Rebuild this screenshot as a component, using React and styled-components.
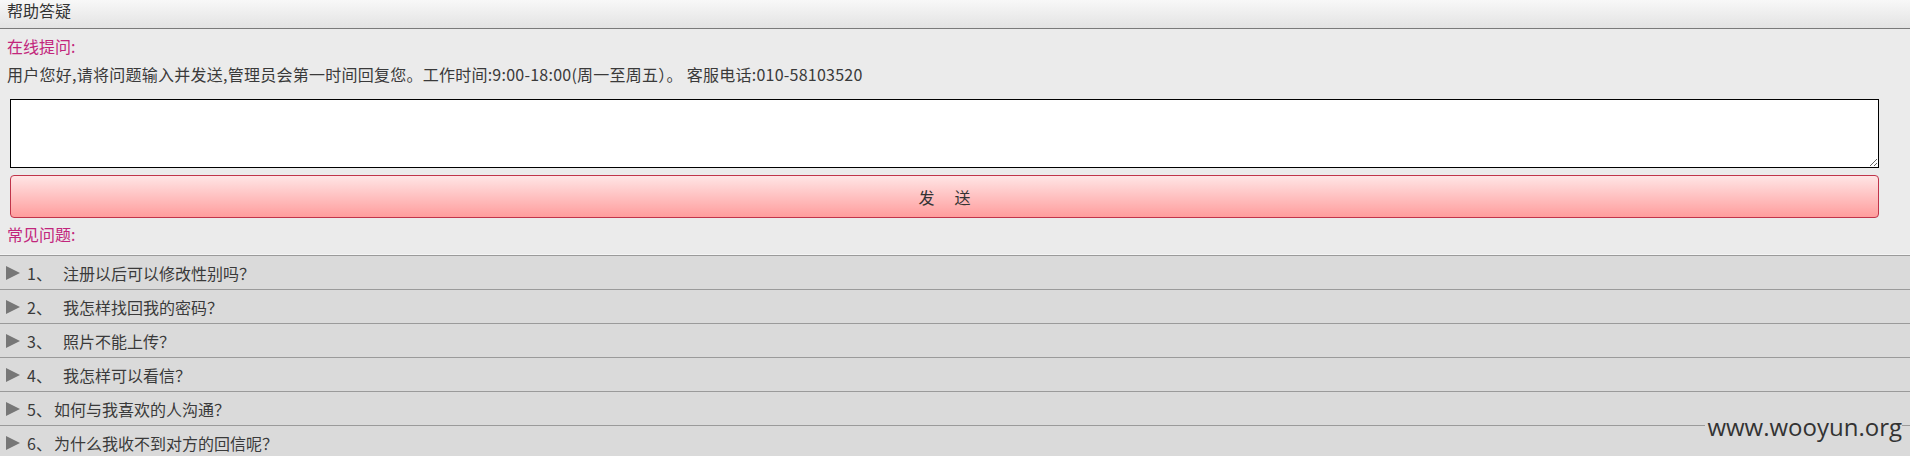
import React from "react";
import styled, { createGlobalStyle } from "styled-components";

const Global = createGlobalStyle`
  html, body { margin: 0; padding: 0; }
  body {
    background: #ebebeb;
    font-family: "Noto Sans CJK SC", "Liberation Sans", sans-serif;
    font-size: 16px;
    color: #333;
    overflow: hidden;
  }
`;

const Page = styled.div`
  position: relative;
  width: 1910px;
  min-height: 456px;
`;

const Header = styled.div`
  height: 28px;
  line-height: 20px;
  padding-left: 7px;
  border-bottom: 1px solid #7a7a7a;
  background: linear-gradient(#f8f8f8, #e3e3e3);
  color: #333;
`;

const Section = styled.div`
  padding: 7px 0 0 0;
`;

const Label = styled.div`
  color: #c2267c;
  line-height: 20px;
  padding-left: 7px;
`;

const Notice = styled.div`
  line-height: 20px;
  padding-left: 7px;
  margin-top: 8px;
  color: #3a3a3a;
  letter-spacing: 0.25px;
`;

const Form = styled.div`
  display: flex;
  flex-direction: column;
  gap: 7px;
  padding: 15px 0 0 10px;
  width: 1869px;
`;

const Area = styled.textarea`
  box-sizing: border-box;
  height: 69px;
  width: 100%;
  border: 1px solid #000;
  background: #fff;
  resize: vertical;
  margin: 0;
  outline: none;
`;

const SendButton = styled.button`
  box-sizing: border-box;
  height: 43px;
  width: 100%;
  border: 1px solid #c0344a;
  border-radius: 4px;
  background: linear-gradient(#ffe5e5, #ff9d9d);
  font-family: "Noto Sans CJK SC", sans-serif;
  font-size: 16px;
  color: #333;
  letter-spacing: 20px;
  text-indent: 20px;
  cursor: pointer;
`;

const FaqTitle = styled(Label)`
  margin-top: 6px;
`;

const List = styled.ul`
  list-style: none;
  margin: 10px 0 0 0;
  padding: 0;
  border-top: 1px solid #f4f4f4;
`;

const Row = styled.li`
  display: flex;
  align-items: center;
  height: 33px;
  border-top: 1px solid #9a9a9a;
  background: #dadada;
  padding-left: 6px;
  color: #3a3a3a;
`;

const Arrow = styled.span`
  width: 0;
  height: 0;
  border-top: 7px solid transparent;
  border-bottom: 7px solid transparent;
  border-left: 14px solid #777;
  margin-right: 7px;
`;

const Num = styled.span`
  width: ${(p) => (p.$wide ? 36 : 27)}px;
  flex: none;
`;

const Watermark = styled.div`
  position: absolute;
  right: 8px;
  top: 411px;
  padding: 0 0 0 2px;
  background: #dadada;
  font-family: "Open Sans", "Liberation Sans", sans-serif;
  font-size: 24px;
  line-height: 32px;
  color: #333;
`;

const faqs = [
  { n: "1、", t: "注册以后可以修改性别吗？", wide: true },
  { n: "2、", t: "我怎样找回我的密码？", wide: true },
  { n: "3、", t: "照片不能上传？", wide: true },
  { n: "4、", t: "我怎样可以看信？", wide: true },
  { n: "5、", t: "如何与我喜欢的人沟通？", wide: false },
  { n: "6、", t: "为什么我收不到对方的回信呢？", wide: false },
];

export default function App() {
  return (
    <Page>
      <Global />
      <Header>帮助答疑</Header>
      <Section>
        <Label>在线提问:</Label>
        <Notice>
          用户您好,请将问题输入并发送,管理员会第一时间回复您。工作时间:9:00-18:00(周一至周五）。 客服电话:010-58103520
        </Notice>
        <Form>
          <Area />
          <SendButton>发送</SendButton>
        </Form>
        <FaqTitle>常见问题:</FaqTitle>
        <List>
          {faqs.map((f) => (
            <Row key={f.n}>
              <Arrow />
              <Num $wide={f.wide}>{f.n}</Num>
              {f.t}
            </Row>
          ))}
        </List>
      </Section>
      <Watermark>www.wooyun.org</Watermark>
    </Page>
  );
}
